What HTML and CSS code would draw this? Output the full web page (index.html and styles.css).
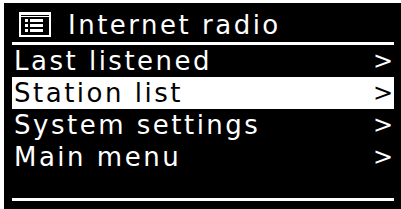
FILE: index.html
```html
<!DOCTYPE html>
<html lang="en">
<head>
  <meta charset="UTF-8">
  <title>Internet radio</title>
  <link rel="stylesheet" href="styles.css">
</head>
<body>
<div class="screen">
  <div class="title-bar">
    <svg class="list-icon" width="32" height="25" viewBox="0 0 32 25">
      <rect x="1" y="1" width="30" height="23" fill="none" stroke="#fff" stroke-width="2"/>
      <rect x="1" y="1" width="30" height="4" fill="#fff"/>
      <rect x="2" y="3" width="28" height="1" fill="#000"/>
      <rect x="6" y="7" width="3" height="3" fill="#fff"/>
      <rect x="11" y="7" width="13" height="3" fill="#fff"/>
      <rect x="6" y="12" width="3" height="3" fill="#fff"/>
      <rect x="11" y="12" width="13" height="3" fill="#fff"/>
      <rect x="6" y="17" width="3" height="3" fill="#fff"/>
      <rect x="11" y="17" width="13" height="3" fill="#fff"/>
    </svg>
    <span class="title">Internet radio</span>
  </div>
  <div class="rule"></div>
  <ul class="menu">
    <li class="item"><span class="label">Last listened</span><span class="arrow">&gt;</span></li>
    <li class="item selected"><span class="label">Station list</span><span class="arrow">&gt;</span></li>
    <li class="item"><span class="label">System settings</span><span class="arrow">&gt;</span></li>
    <li class="item"><span class="label">Main menu</span><span class="arrow">&gt;</span></li>
  </ul>
  <div class="rule bottom"></div>
</div>
</body>
</html>
```

FILE: styles.css
```css
body {
  margin: 0;
  background: #fff;
  font-family: "DejaVu Sans", sans-serif;
}
.screen {
  margin: 3px 0 0 4px;
  height: 206px;
  background: #000;
  color: #fff;
  display: flex;
  flex-direction: column;
  padding-left: 8px;
  padding-right: 7px;
  box-sizing: border-box;
}
.title-bar {
  display: flex;
  align-items: center;
  gap: 17px;
  height: 39px;
  padding: 4px 0 0 7px;
  box-sizing: border-box;
}
.title {
  font-size: 26px;
  line-height: 30px;
  letter-spacing: 2.5px;
}
.rule {
  height: 3px;
  background: #fff;
}
.menu {
  list-style: none;
  margin: 0;
  padding: 0;
  flex: 1;
}
.item {
  display: flex;
  justify-content: space-between;
  height: 32px;
  line-height: 32px;
  font-size: 26px;
  padding: 0 1px 0 2px;
}
.label {
  letter-spacing: 2.5px;
}
.selected {
  background: #fff;
  color: #000;
}
.arrow {
  font-size: 24px;
}
.bottom {
  margin-bottom: 8px;
}
```
